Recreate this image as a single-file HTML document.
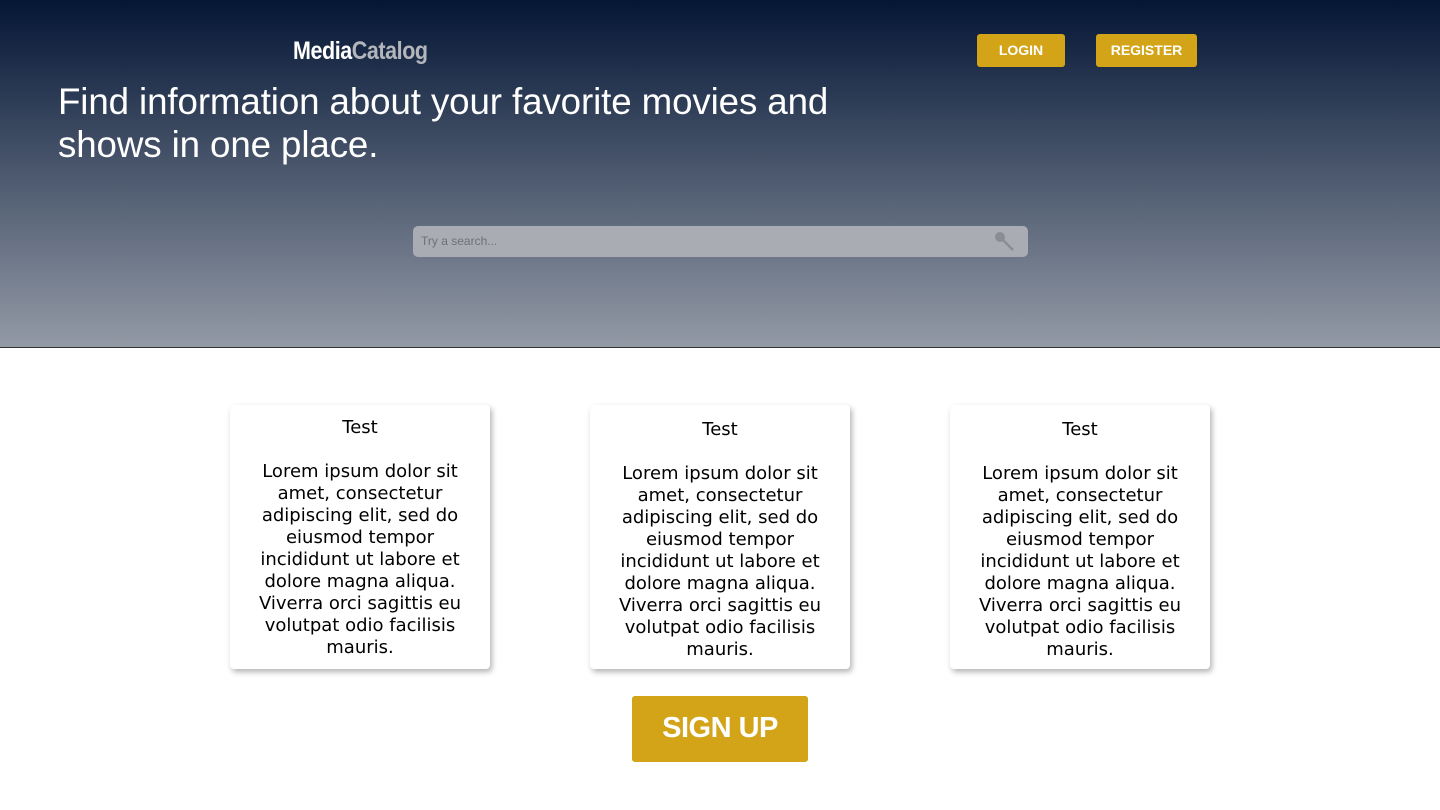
<!DOCTYPE html>
<html><head><style>
body{margin:0;width:1440px;height:810px;position:relative;font-family:"Liberation Sans",sans-serif;background:#fff;overflow:hidden}
.hero{position:absolute;left:0;top:0;width:1440px;height:347px;background:linear-gradient(#041635,#939aa6);border-bottom:1px solid #333}
.logo{position:absolute;left:293px;top:37px;font-size:25px;font-weight:bold;color:#fff;letter-spacing:-0.5px;transform:scaleX(0.86);transform-origin:left}
.logo span{color:#b3b6bb}
.btn{position:absolute;top:34px;height:33px;background:#d4a418;color:#fff;font-weight:bold;font-size:14px;border-radius:3px;text-align:center;line-height:32px}
h1{position:absolute;left:58px;top:80px;margin:0;font-weight:normal;color:#fff;font-size:36.7px;line-height:43px;width:820px;letter-spacing:-0.1px}
.search{position:absolute;left:413px;top:226px;width:615px;height:31px;background:#a9adb3;border-radius:5px}
.search span{position:absolute;left:8px;top:8px;font-size:12px;color:#6d7077}
.card{position:absolute;top:405px;width:260px;height:264px;background:#fff;border-radius:4px;box-shadow:2px 3px 6px rgba(0,0,0,.3);text-align:center;font-family:"DejaVu Sans",sans-serif;font-size:18px;line-height:22px;color:#000}
.card p{margin:0 auto;width:230px}
.sign{position:absolute;left:632px;top:696px;width:176px;height:66px;background:#d4a418;color:#fff;font-weight:bold;font-size:29px;text-align:center;line-height:64px;border-radius:3px;letter-spacing:-0.5px}
</style></head><body>
<div class="hero">
<div class="logo">Media<span>Catalog</span></div>
<div class="btn" style="left:977px;width:88px">LOGIN</div>
<div class="btn" style="left:1096px;width:101px">REGISTER</div>
<h1>Find information about your favorite movies and shows in one place.</h1>
<div class="search"><span>Try a search...</span>
<svg style="position:absolute;left:580px;top:4px" width="24" height="24"><circle cx="7" cy="7" r="5" fill="#8a8d92"/><line x1="9" y1="9" x2="20" y2="20" stroke="#8a8d92" stroke-width="2.5"/></svg></div>
</div>
<div class="card" style="left:230px"><p style="margin-top:12px">Test</p><p style="margin-top:22px">Lorem ipsum dolor sit amet, consectetur adipiscing elit, sed do eiusmod tempor incididunt ut labore et dolore magna aliqua. Viverra orci sagittis eu volutpat odio facilisis mauris.</p></div>
<div class="card" style="left:590px"><p style="margin-top:14px">Test</p><p style="margin-top:22px">Lorem ipsum dolor sit amet, consectetur adipiscing elit, sed do eiusmod tempor incididunt ut labore et dolore magna aliqua. Viverra orci sagittis eu volutpat odio facilisis mauris.</p></div>
<div class="card" style="left:950px"><p style="margin-top:14px">Test</p><p style="margin-top:22px">Lorem ipsum dolor sit amet, consectetur adipiscing elit, sed do eiusmod tempor incididunt ut labore et dolore magna aliqua. Viverra orci sagittis eu volutpat odio facilisis mauris.</p></div>
<div class="sign">SIGN UP</div>
</body></html>
